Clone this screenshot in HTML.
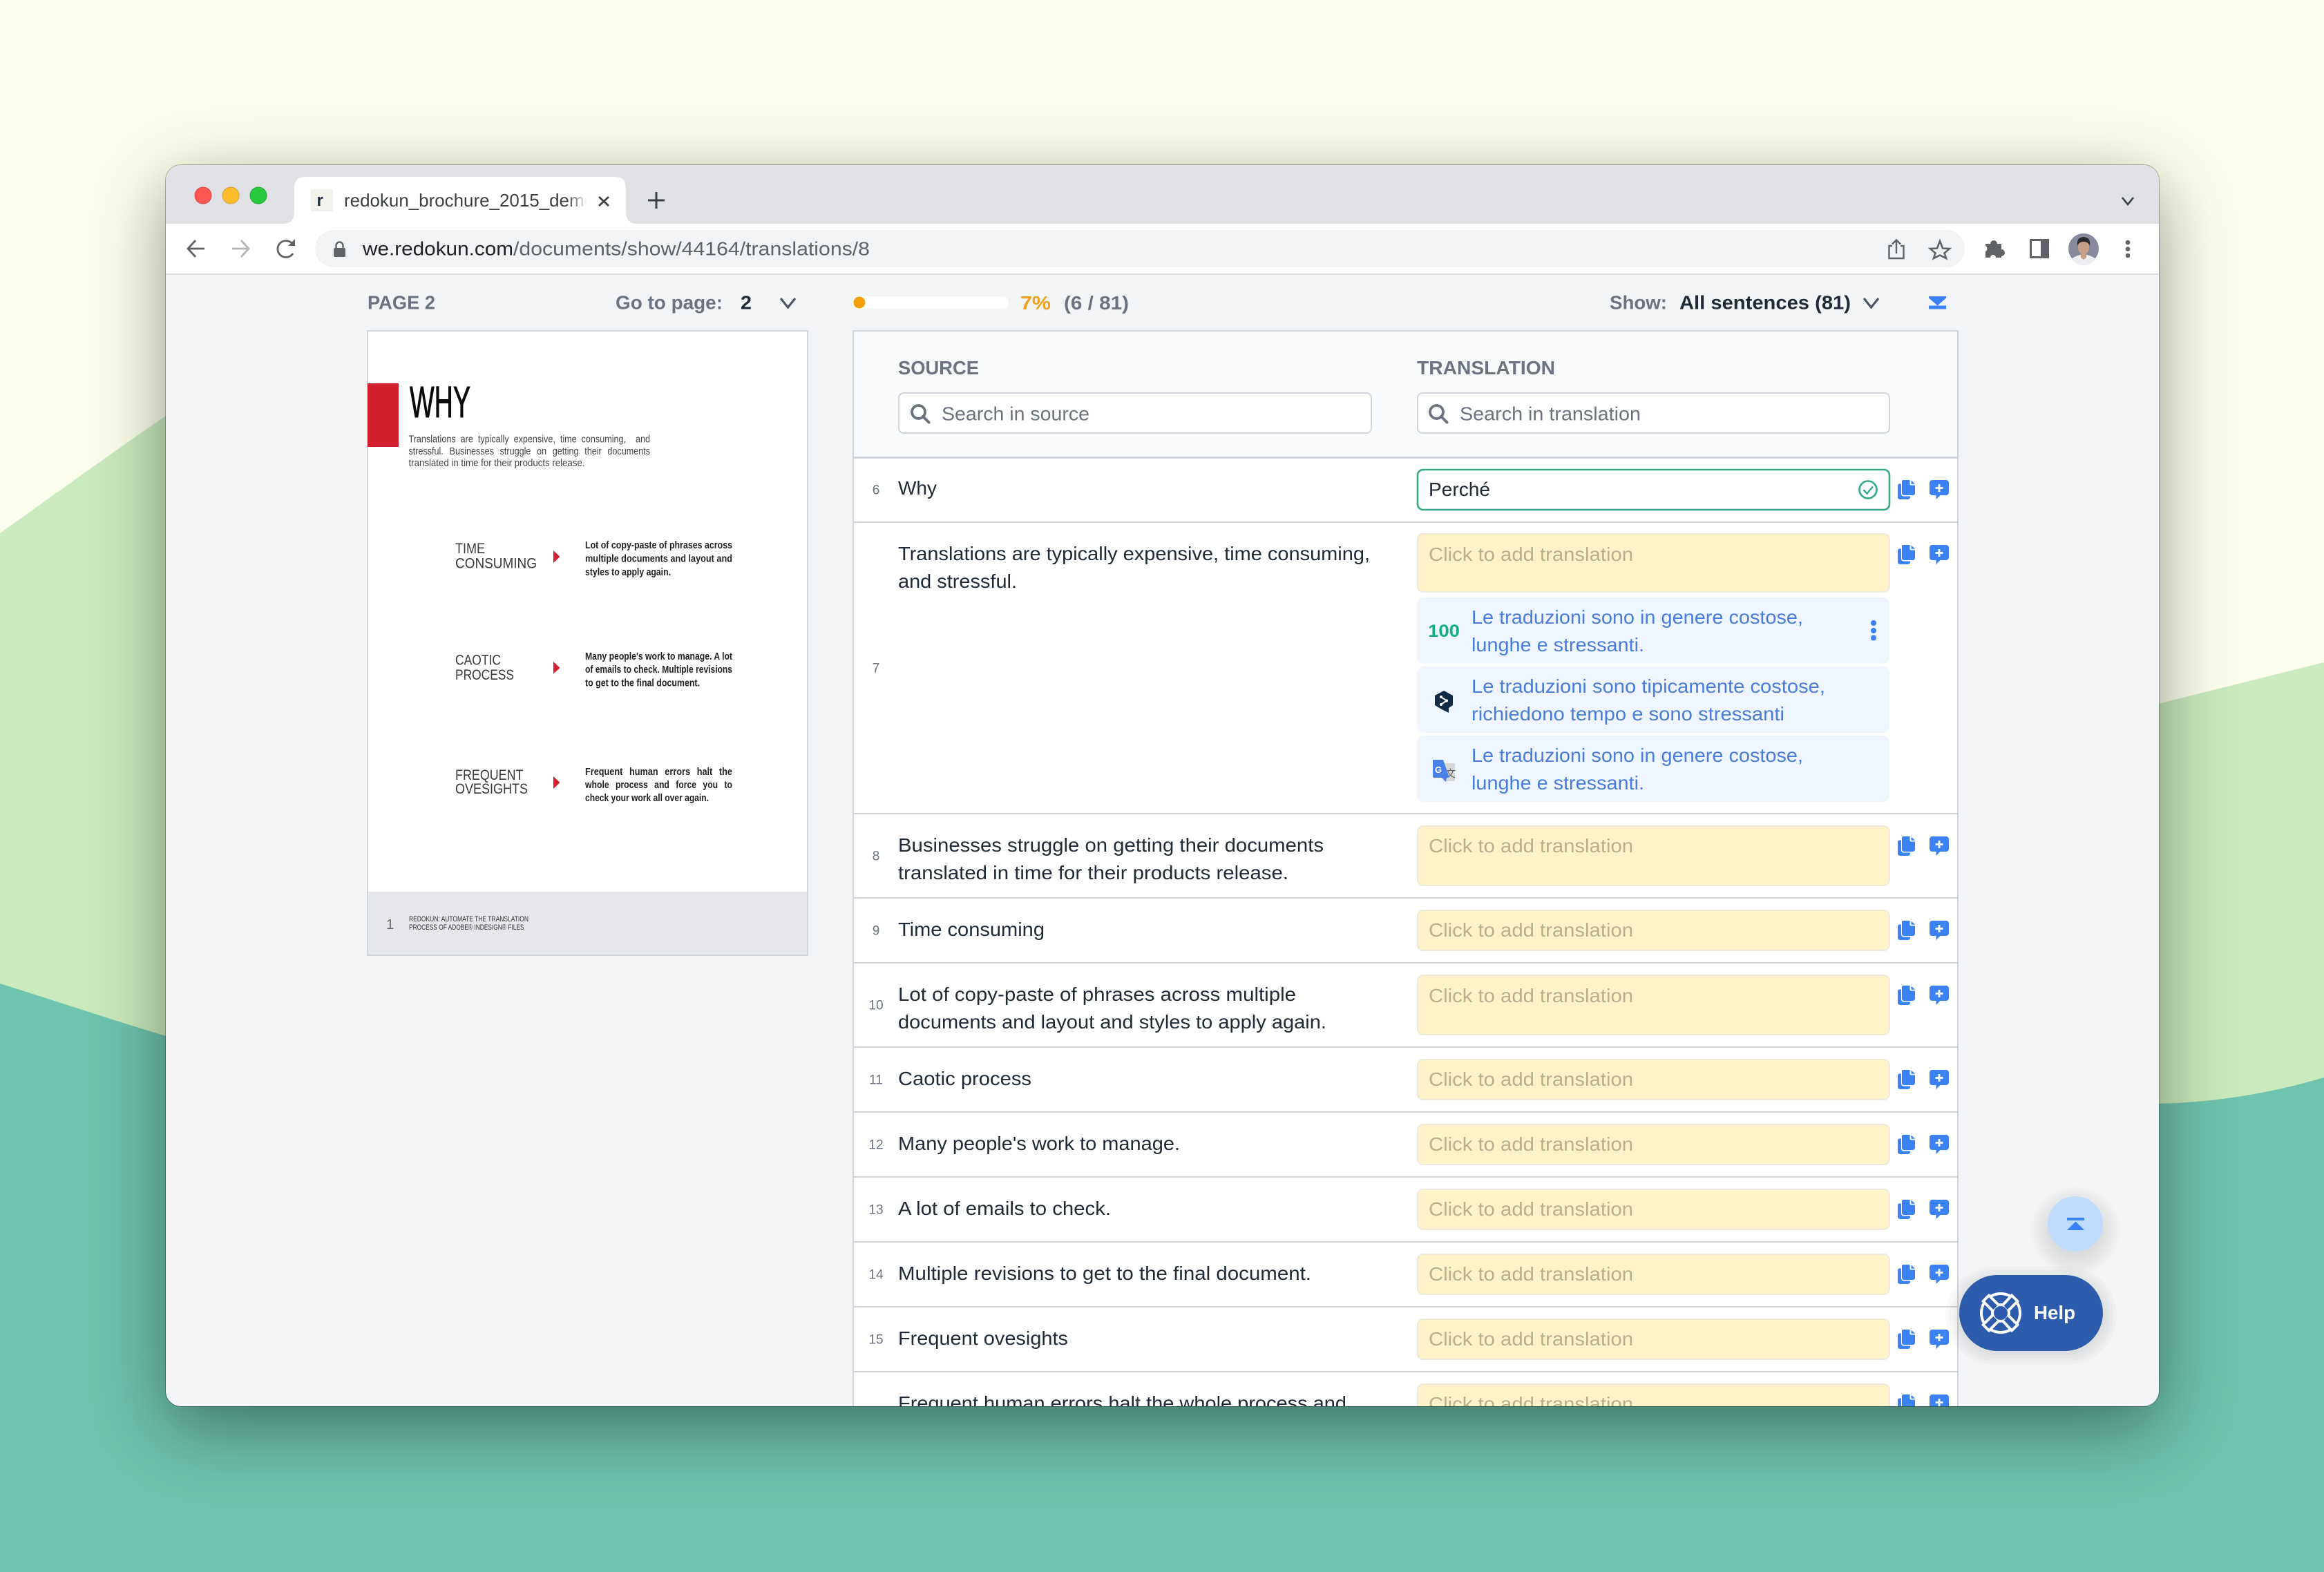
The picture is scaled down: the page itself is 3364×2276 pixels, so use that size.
<!DOCTYPE html>
<html lang="en"><head><meta charset="utf-8"><title>Redokun translation editor</title>
<style>
html,body{margin:0;padding:0;width:3364px;height:2276px;overflow:hidden;background:#fcffeb}
svg{position:absolute;left:0;top:0;display:block}
text{font-family:"Liberation Sans",Arial,sans-serif;white-space:pre}
.b{font-weight:700}
.n{font-family:"Liberation Sans Narrow","Liberation Sans",sans-serif}
.s{font-size:28px;fill:#1f2937}
.p{font-size:28px;fill:#b7b08f}
.t{font-size:28px;fill:#4a7cdc}
.num{font-size:19px;fill:#6b7280;text-anchor:middle}
.h{font-size:27.5px;fill:#6b7280;font-weight:700}
.d{font-size:14.5px;fill:#222;font-weight:700}
.c{font-size:21px;fill:#3a3a3a}
</style></head><body>
<svg width="3364" height="2276" viewBox="0 0 3364 2276" xmlns="http://www.w3.org/2000/svg">
<defs>
<linearGradient id="hx" gradientUnits="userSpaceOnUse" x1="110" x2="3255" y1="0" y2="0">
<stop offset="0" stop-color="#000" stop-opacity="0"/><stop offset=".00954" stop-color="#000" stop-opacity=".023"/><stop offset=".01749" stop-color="#000" stop-opacity=".067"/><stop offset=".02544" stop-color="#000" stop-opacity=".159"/><stop offset=".03339" stop-color="#000" stop-opacity=".309"/><stop offset=".04134" stop-color="#000" stop-opacity=".5"/><stop offset=".04928" stop-color="#000" stop-opacity=".691"/><stop offset=".05723" stop-color="#000" stop-opacity=".841"/><stop offset=".06518" stop-color="#000" stop-opacity=".933"/><stop offset=".07313" stop-color="#000" stop-opacity=".977"/><stop offset=".08267" stop-color="#000" stop-opacity="1"/>
<stop offset=".91733" stop-color="#000" stop-opacity="1"/><stop offset=".92687" stop-color="#000" stop-opacity=".977"/><stop offset=".93482" stop-color="#000" stop-opacity=".933"/><stop offset=".94277" stop-color="#000" stop-opacity=".841"/><stop offset=".95072" stop-color="#000" stop-opacity=".691"/><stop offset=".95866" stop-color="#000" stop-opacity=".5"/><stop offset=".96661" stop-color="#000" stop-opacity=".309"/><stop offset=".97456" stop-color="#000" stop-opacity=".159"/><stop offset=".98251" stop-color="#000" stop-opacity=".067"/><stop offset=".99046" stop-color="#000" stop-opacity=".023"/><stop offset="1" stop-color="#000" stop-opacity="0"/>
</linearGradient>
<linearGradient id="vy" gradientUnits="userSpaceOnUse" x1="0" x2="0" y1="139" y2="2196">
<stop offset="0" stop-color="#fff" stop-opacity="0"/><stop offset=".01458" stop-color="#fff" stop-opacity=".023"/><stop offset=".02674" stop-color="#fff" stop-opacity=".067"/><stop offset=".03889" stop-color="#fff" stop-opacity=".159"/><stop offset=".05105" stop-color="#fff" stop-opacity=".309"/><stop offset=".0632" stop-color="#fff" stop-opacity=".5"/><stop offset=".07535" stop-color="#fff" stop-opacity=".691"/><stop offset=".08751" stop-color="#fff" stop-opacity=".841"/><stop offset=".09966" stop-color="#fff" stop-opacity=".933"/><stop offset=".11181" stop-color="#fff" stop-opacity=".977"/><stop offset=".1264" stop-color="#fff" stop-opacity="1"/>
<stop offset=".8736" stop-color="#fff" stop-opacity="1"/><stop offset=".88819" stop-color="#fff" stop-opacity=".977"/><stop offset=".90034" stop-color="#fff" stop-opacity=".933"/><stop offset=".91249" stop-color="#fff" stop-opacity=".841"/><stop offset=".92465" stop-color="#fff" stop-opacity=".691"/><stop offset=".9368" stop-color="#fff" stop-opacity=".5"/><stop offset=".94895" stop-color="#fff" stop-opacity=".309"/><stop offset=".96111" stop-color="#fff" stop-opacity=".159"/><stop offset=".97326" stop-color="#fff" stop-opacity=".067"/><stop offset=".98542" stop-color="#fff" stop-opacity=".023"/><stop offset="1" stop-color="#fff" stop-opacity="0"/>
</linearGradient>
<mask id="my" maskUnits="userSpaceOnUse" x="110" y="139" width="3145" height="2057"><rect x="110" y="139" width="3145" height="2057" fill="url(#vy)"/></mask>
<radialGradient id="upsh" gradientUnits="userSpaceOnUse" cx="3004" cy="1782" r="66"><stop offset=".55" stop-color="#000" stop-opacity=".1"/><stop offset="1" stop-color="#000" stop-opacity="0"/></radialGradient>
<clipPath id="win"><rect x="240" y="239" width="2885" height="1797" rx="22"/></clipPath>
<linearGradient id="fade" gradientUnits="userSpaceOnUse" x1="822" x2="850" y1="0" y2="0"><stop offset="0" stop-color="#3c4043"/><stop offset="1" stop-color="#3c4043" stop-opacity="0"/></linearGradient>
<symbol id="copy" width="25" height="28" viewBox="0 0 25 28" overflow="visible">
<path d="M0 8a2.5 2.5 0 0 1 2.5-2.5H5V20a3.5 3.5 0 0 0 3.500 3.500H18V25a3 3 0 0 1-3 3H3a3 3 0 0 1-3-3Z" fill="#3b82f6"/>
<path d="M8 0H17.500V5.500A2 2 0 0 0 19.500 7.500H25V19a3 3 0 0 1-3 3H9a3 3 0 0 1-3-3V2a2 2 0 0 1 2-2Z" fill="#3b82f6"/>
<path d="M19.500 0.500L25 5.800H19.500Z" fill="#3b82f6"/>
</symbol>
<symbol id="cm" width="28" height="28" viewBox="0 0 28 28" overflow="visible">
<path d="M4 0H24a4 4 0 0 1 4 4V18a4 4 0 0 1-4 4H15.500L9.500 28V22H4a4 4 0 0 1-4-4V4a4 4 0 0 1 4-4Z" fill="#3b82f6"/>
<path d="M14 6V17M8.500 11.500H19.500" stroke="#fff" stroke-width="2.800" fill="none"/>
</symbol>
<symbol id="mag" width="28" height="28" viewBox="0 0 28 28" overflow="visible">
<circle cx="11.500" cy="11.500" r="9.500" fill="none" stroke="#6b7280" stroke-width="3.800"/>
<path d="M18 18L26.500 26.500" stroke="#6b7280" stroke-width="4" stroke-linecap="round"/>
</symbol>
</defs>
<rect width="3364" height="2276" fill="#fcffeb"/>
<path d="M0 772C80 715 160 657 240 602C1200 300 2400 1200 3124 1019C3200 1000 3280 980 3364 959V2276H0Z" fill="#cbeabd"/>
<path d="M0 1424C80 1449 160 1476 240 1500C1200 1640 2400 1500 3124 1598C3210 1596 3290 1582 3364 1560V2276H0Z" fill="#6ec4ae"/>
<!-- window shadow: product of horizontal and vertical falloff -->
<rect x="110" y="139" width="3145" height="2057" fill="url(#hx)" fill-opacity=".42" opacity=".999" mask="url(#my)"/>
<rect x="239.500" y="238.500" width="2886" height="1798" rx="22.500" fill="none" stroke="#000" stroke-opacity=".28" stroke-width="1"/>
<g clip-path="url(#win)">
<!-- chrome -->
<rect x="240" y="239" width="2885" height="1797" fill="#f3f4f6"/>
<rect x="240" y="239" width="2885" height="85" fill="#dfe1e5"/>
<rect x="240" y="324" width="2885" height="72" fill="#fff"/>
<rect x="240" y="396" width="2885" height="2" fill="#dadce0"/>
<circle cx="294" cy="283" r="12" fill="#fc5753" stroke="#df4744" stroke-width="1"/>
<circle cx="334" cy="283" r="12" fill="#fdbc2e" stroke="#de9f34" stroke-width="1"/>
<circle cx="374" cy="283" r="12" fill="#28c83f" stroke="#27aa35" stroke-width="1"/>
<path d="M410 324Q426 324 426 306V272Q426 256 442 256H890Q906 256 906 272V306Q906 324 922 324Z" fill="#fff"/>
<rect x="450" y="274" width="32" height="32" fill="#f3f3ee"/>
<text x="458.500" y="298" font-size="24" class="b" fill="#1f2d3d">r</text>
<text x="498" y="299" font-size="26" textLength="362" lengthAdjust="spacingAndGlyphs" fill="url(#fade)">redokun_brochure_2015_demo</text>
<path d="M867 285L881 298M881 285L867 298" stroke="#3c4043" stroke-width="2.800"/>
<path d="M950 278V302M938 290H962" stroke="#3c4043" stroke-width="3"/>
<path d="M3072 286L3080 296L3088 286" stroke="#3c4043" stroke-width="2.600" fill="none"/>
<path d="M296 360H273M283 348L272 360L283 372" stroke="#5f6368" stroke-width="2.800" fill="none"/>
<path d="M336 360H359M349 348L360 360L349 372" stroke="#b4b7bb" stroke-width="2.800" fill="none"/>
<path d="M424 354A12 12 0 1 0 424 367" stroke="#5f6368" stroke-width="2.800" fill="none"/>
<path d="M417 356H427V346Z" fill="#5f6368"/>
<rect x="456" y="333" width="2388" height="54" rx="27" fill="#f1f3f4"/>
<rect x="483" y="359" width="17" height="13" rx="2" fill="#5f6368"/>
<path d="M486.500 359V355.500A5 5 0 0 1 496.500 355.500V359" stroke="#5f6368" stroke-width="2.400" fill="none"/>
<text x="525" y="369.500" font-size="28" textLength="218" lengthAdjust="spacingAndGlyphs" fill="#202124">we.redokun.com</text>
<text x="743" y="369.500" font-size="28" textLength="516" lengthAdjust="spacingAndGlyphs" fill="#5f6368">/documents/show/44164/translations/8</text>
<path d="M2739 356H2734.500V374H2755.500V356H2751M2745 367V348M2739 353.500L2745 347.500L2751 353.500" stroke="#5f6368" stroke-width="2.400" fill="none"/>
<path d="M2808 349L2812 359.500L2822 360L2814.500 366.500L2817 374L2808 369.500L2799 374L2801.500 366.500L2794 360L2804 359.500Z" stroke="#5f6368" stroke-width="2.600" fill="none"/>
<path d="M2874 353H2881A5 5 0 0 1 2891 353H2897V361A5 5 0 0 1 2897 371V373H2889A4 4 0 0 0 2881 373H2874V364A4.500 4.500 0 0 0 2874 356Z" fill="#5f6368"/>
<rect x="2938" y="346" width="28" height="28" fill="#5f6368"/>
<rect x="2941" y="349" width="13" height="22" fill="#fff"/>
<circle cx="3016" cy="360" r="22" fill="#878a9b"/>
<path d="M2998 375Q3016 362 3034 375A22 22 0 0 1 2998 375Z" fill="#eceef2"/>
<ellipse cx="3016" cy="358" rx="8" ry="11" fill="#c79d87"/>
<path d="M3012 366H3020V373L3016 376L3012 373Z" fill="#c79d87"/>
<path d="M3007 356Q3005 344 3016 343Q3027 344 3025 356Q3023 350 3016 350Q3009 350 3007 356Z" fill="#2b2a2e"/>
<circle cx="3080" cy="351" r="3.300" fill="#5f6368"/><circle cx="3080" cy="360.500" r="3.300" fill="#5f6368"/><circle cx="3080" cy="370" r="3.300" fill="#5f6368"/>

<!-- top bar -->
<text x="532" y="447.500" class="h" textLength="98" lengthAdjust="spacingAndGlyphs">PAGE 2</text>
<text x="891" y="447.500" class="h" textLength="155" lengthAdjust="spacingAndGlyphs">Go to page:</text>
<text x="1072" y="447.500" class="h" style="fill:#1f2937" textLength="16" lengthAdjust="spacingAndGlyphs">2</text>
<path d="M1130 432L1140.500 445L1151 432" stroke="#4b5563" stroke-width="3.200" fill="none"/>
<rect x="1236" y="429" width="224" height="18" rx="9" fill="#fff"/>
<circle cx="1244" cy="438" r="8.500" fill="#f59e0b"/>
<text x="1477" y="448" class="h" style="fill:#f29f1b" textLength="44" lengthAdjust="spacingAndGlyphs">7%</text>
<text x="1540" y="448" class="h" textLength="94" lengthAdjust="spacingAndGlyphs">(6 / 81)</text>
<text x="2330" y="447.500" class="h" textLength="83" lengthAdjust="spacingAndGlyphs">Show:</text>
<text x="2431" y="447.500" class="h" style="fill:#1f2937" textLength="248" lengthAdjust="spacingAndGlyphs">All sentences (81)</text>
<path d="M2698 432L2708.500 445L2719 432" stroke="#4b5563" stroke-width="3.200" fill="none"/>
<path d="M2792 429H2817V431.500L2804.500 442.500L2792 431.500ZM2792 442.500H2817V447.500H2792Z" fill="#3b82f6"/>

<!-- document preview -->
<rect x="532" y="479" width="637" height="904" fill="#fff" stroke="#d1d5db" stroke-width="2"/>
<rect x="532" y="555" width="45" height="92" fill="#d2202f"/>
<text x="593" y="604" class="n" font-size="64" textLength="88" lengthAdjust="spacingAndGlyphs" fill="#0a0a0a" stroke="#0a0a0a" stroke-width="1">WHY</text>
<g>
<text x="591.500" y="640.500" class="n" font-size="14.500" fill="#444" word-spacing="4" textLength="349.500" lengthAdjust="spacingAndGlyphs">Translations are typically expensive, time consuming,  and</text>
<text x="591.500" y="658" class="n" font-size="14.500" fill="#444" word-spacing="6" textLength="349.500" lengthAdjust="spacingAndGlyphs">stressful. Businesses struggle on getting their documents</text>
<text x="591.500" y="675" class="n" font-size="14.500" fill="#444" textLength="255" lengthAdjust="spacingAndGlyphs">translated in time for their products release.</text>
</g>
<text x="659" y="801" class="n c" textLength="43" lengthAdjust="spacingAndGlyphs">TIME</text>
<text x="659" y="822.500" class="n c" textLength="118" lengthAdjust="spacingAndGlyphs">CONSUMING</text>
<text x="659" y="962.500" class="n c" textLength="66" lengthAdjust="spacingAndGlyphs">CAOTIC</text>
<text x="659" y="984" class="n c" textLength="85" lengthAdjust="spacingAndGlyphs">PROCESS</text>
<text x="659" y="1129" class="n c" textLength="98.500" lengthAdjust="spacingAndGlyphs">FREQUENT</text>
<text x="659" y="1149" class="n c" textLength="105" lengthAdjust="spacingAndGlyphs">OVESIGHTS</text>
<path d="M801 797L810.500 806L801 815ZM801 958L810.500 967L801 975.500ZM801 1124L810.500 1133L801 1142Z" fill="#d2202f"/>
<text x="847" y="794" class="n d" textLength="213" lengthAdjust="spacingAndGlyphs">Lot of copy-paste of phrases across</text>
<text x="847" y="813.500" class="n d" textLength="213" lengthAdjust="spacingAndGlyphs">multiple documents and layout and</text>
<text x="847" y="833" class="n d" textLength="124" lengthAdjust="spacingAndGlyphs">styles to apply again.</text>
<text x="847" y="955" class="n d" textLength="213" lengthAdjust="spacingAndGlyphs">Many people's work to manage. A lot</text>
<text x="847" y="974" class="n d" textLength="213" lengthAdjust="spacingAndGlyphs">of emails to check. Multiple revisions</text>
<text x="847" y="993.500" class="n d" textLength="166" lengthAdjust="spacingAndGlyphs">to get to the final document.</text>
<text x="847" y="1122" class="n d" word-spacing="7" textLength="213" lengthAdjust="spacingAndGlyphs">Frequent human errors halt the</text>
<text x="847" y="1141" class="n d" word-spacing="7" textLength="213" lengthAdjust="spacingAndGlyphs">whole process and force you to</text>
<text x="847" y="1160" class="n d" textLength="179" lengthAdjust="spacingAndGlyphs">check your work all over again.</text>
<rect x="533" y="1291" width="635" height="91" fill="#e5e7eb"/>
<text x="559" y="1345" class="n" font-size="20" fill="#666">1</text>
<text x="592" y="1334" class="n" font-size="11" fill="#333" textLength="173" lengthAdjust="spacingAndGlyphs">REDOKUN: AUTOMATE THE TRANSLATION</text>
<text x="592" y="1346" class="n" font-size="11" fill="#333" textLength="166.500" lengthAdjust="spacingAndGlyphs">PROCESS OF ADOBE® INDESIGN® FILES</text>

<!-- table -->
<rect x="1235" y="479" width="1599" height="1600" fill="#fff" stroke="#d1d5db" stroke-width="2"/>
<rect x="1236" y="480" width="1597" height="181" fill="#f9fafb"/>
<rect x="1236" y="661" width="1597" height="3" fill="#d1d5db"/>
<text x="1300" y="542" class="h" textLength="117" lengthAdjust="spacingAndGlyphs">SOURCE</text>
<text x="2051" y="542" class="h" textLength="200" lengthAdjust="spacingAndGlyphs">TRANSLATION</text>
<rect x="1301" y="569" width="684" height="58" rx="7" fill="#fff" stroke="#d1d5db" stroke-width="2"/>
<rect x="2052" y="569" width="683" height="58" rx="7" fill="#fff" stroke="#d1d5db" stroke-width="2"/>
<use href="#mag" x="1318" y="585"/>
<use href="#mag" x="2068" y="585"/>
<text x="1363" y="608.500" font-size="28" fill="#6b7280" textLength="214" lengthAdjust="spacingAndGlyphs">Search in source</text>
<text x="2113" y="608.500" font-size="28" fill="#6b7280" textLength="262" lengthAdjust="spacingAndGlyphs">Search in translation</text>

<!-- row lines -->
<g fill="#d1d5db">
<rect x="1236" y="755" width="1597" height="2"/>
<rect x="1236" y="1177" width="1597" height="2"/>
<rect x="1236" y="1299" width="1597" height="2"/>
<rect x="1236" y="1393" width="1597" height="2"/>
<rect x="1236" y="1515" width="1597" height="2"/>
<rect x="1236" y="1609" width="1597" height="2"/>
<rect x="1236" y="1703" width="1597" height="2"/>
<rect x="1236" y="1797" width="1597" height="2"/>
<rect x="1236" y="1891" width="1597" height="2"/>
<rect x="1236" y="1985" width="1597" height="2"/>
</g>

<!-- numbers -->
<text x="1268" y="715.500" class="num">6</text>
<text x="1268" y="973.500" class="num">7</text>
<text x="1268" y="1245.500" class="num">8</text>
<text x="1268" y="1353.500" class="num">9</text>
<text x="1268" y="1461.500" class="num">10</text>
<text x="1268" y="1569.500" class="num">11</text>
<text x="1268" y="1663.500" class="num">12</text>
<text x="1268" y="1757.500" class="num">13</text>
<text x="1268" y="1851.500" class="num">14</text>
<text x="1268" y="1945.500" class="num">15</text>

<!-- source -->
<text x="1300" y="716" class="s" textLength="56" lengthAdjust="spacingAndGlyphs">Why</text>
<text x="1300" y="811" class="s" textLength="683" lengthAdjust="spacingAndGlyphs">Translations are typically expensive, time consuming,</text>
<text x="1300" y="851" class="s" textLength="172" lengthAdjust="spacingAndGlyphs">and stressful.</text>
<text x="1300" y="1233" class="s" textLength="616" lengthAdjust="spacingAndGlyphs">Businesses struggle on getting their documents</text>
<text x="1300" y="1273" class="s" textLength="565" lengthAdjust="spacingAndGlyphs">translated in time for their products release.</text>
<text x="1300" y="1355" class="s" textLength="212" lengthAdjust="spacingAndGlyphs">Time consuming</text>
<text x="1300" y="1449" class="s" textLength="576" lengthAdjust="spacingAndGlyphs">Lot of copy-paste of phrases across multiple</text>
<text x="1300" y="1489" class="s" textLength="620" lengthAdjust="spacingAndGlyphs">documents and layout and styles to apply again.</text>
<text x="1300" y="1571" class="s" textLength="193" lengthAdjust="spacingAndGlyphs">Caotic process</text>
<text x="1300" y="1665" class="s" textLength="408" lengthAdjust="spacingAndGlyphs">Many people's work to manage.</text>
<text x="1300" y="1759" class="s" textLength="308" lengthAdjust="spacingAndGlyphs">A lot of emails to check.</text>
<text x="1300" y="1853" class="s" textLength="598" lengthAdjust="spacingAndGlyphs">Multiple revisions to get to the final document.</text>
<text x="1300" y="1947" class="s" textLength="246" lengthAdjust="spacingAndGlyphs">Frequent ovesights</text>
<text x="1300" y="2041" class="s" textLength="649" lengthAdjust="spacingAndGlyphs">Frequent human errors halt the whole process and</text>

<!-- translation boxes -->
<rect x="2052" y="680" width="683" height="58" rx="8" fill="#fff" stroke="#38a78a" stroke-width="2.600"/>
<text x="2068" y="718" class="s" textLength="89" lengthAdjust="spacingAndGlyphs">Perché</text>
<circle cx="2704" cy="709" r="12.500" fill="none" stroke="#2fa98a" stroke-width="2.600"/>
<path d="M2697.500 709.500L2702.500 714.500L2711 704.500" fill="none" stroke="#2fa98a" stroke-width="2.400"/>
<g fill="#fef2c8" stroke="#eeeade" stroke-width="2">
<rect x="2052" y="773" width="683" height="84" rx="8"/>
<rect x="2052" y="1196" width="683" height="86" rx="8"/>
<rect x="2052" y="1318" width="683" height="58" rx="8"/>
<rect x="2052" y="1412" width="683" height="86" rx="8"/>
<rect x="2052" y="1534" width="683" height="58" rx="8"/>
<rect x="2052" y="1628" width="683" height="58" rx="8"/>
<rect x="2052" y="1722" width="683" height="58" rx="8"/>
<rect x="2052" y="1816" width="683" height="58" rx="8"/>
<rect x="2052" y="1910" width="683" height="58" rx="8"/>
<rect x="2052" y="2004" width="683" height="58" rx="8"/>
</g>
<text x="2068" y="812" class="p" textLength="296" lengthAdjust="spacingAndGlyphs">Click to add translation</text>
<text x="2068" y="1234" class="p" textLength="296" lengthAdjust="spacingAndGlyphs">Click to add translation</text>
<text x="2068" y="1356" class="p" textLength="296" lengthAdjust="spacingAndGlyphs">Click to add translation</text>
<text x="2068" y="1451" class="p" textLength="296" lengthAdjust="spacingAndGlyphs">Click to add translation</text>
<text x="2068" y="1572" class="p" textLength="296" lengthAdjust="spacingAndGlyphs">Click to add translation</text>
<text x="2068" y="1666" class="p" textLength="296" lengthAdjust="spacingAndGlyphs">Click to add translation</text>
<text x="2068" y="1760" class="p" textLength="296" lengthAdjust="spacingAndGlyphs">Click to add translation</text>
<text x="2068" y="1854" class="p" textLength="296" lengthAdjust="spacingAndGlyphs">Click to add translation</text>
<text x="2068" y="1948" class="p" textLength="296" lengthAdjust="spacingAndGlyphs">Click to add translation</text>
<text x="2068" y="2042" class="p" textLength="296" lengthAdjust="spacingAndGlyphs">Click to add translation</text>

<!-- suggestions -->
<rect x="2051" y="865" width="684" height="96" rx="10" fill="#eff6ff"/>
<rect x="2051" y="965" width="684" height="96" rx="10" fill="#eff6ff"/>
<rect x="2051" y="1065" width="684" height="96" rx="10" fill="#eff6ff"/>
<text x="2067" y="922" font-size="25" class="b" fill="#10b07f" textLength="46" lengthAdjust="spacingAndGlyphs">100</text>
<text x="2130" y="903" class="t" textLength="480" lengthAdjust="spacingAndGlyphs">Le traduzioni sono in genere costose,</text>
<text x="2130" y="943" class="t" textLength="250" lengthAdjust="spacingAndGlyphs">lunghe e stressanti.</text>
<circle cx="2712" cy="902" r="4" fill="#3b82f6"/><circle cx="2712" cy="913" r="4" fill="#3b82f6"/><circle cx="2712" cy="923.500" r="4" fill="#3b82f6"/>
<text x="2130" y="1003" class="t" textLength="512" lengthAdjust="spacingAndGlyphs">Le traduzioni sono tipicamente costose,</text>
<text x="2130" y="1043" class="t" textLength="453" lengthAdjust="spacingAndGlyphs">richiedono tempo e sono stressanti</text>
<text x="2130" y="1103" class="t" textLength="480" lengthAdjust="spacingAndGlyphs">Le traduzioni sono in genere costose,</text>
<text x="2130" y="1143" class="t" textLength="250" lengthAdjust="spacingAndGlyphs">lunghe e stressanti.</text>
<path d="M2090 1000L2103 1007V1021L2097 1025V1032L2087 1027L2077 1021V1007Z" fill="#0f2b46"/>
<path d="M2086.500 1009.500L2094 1014.500L2086.500 1019.500" stroke="#fff" stroke-width="2" fill="none"/>
<circle cx="2086" cy="1009" r="2" fill="#fff"/><circle cx="2086" cy="1020" r="2" fill="#fff"/><circle cx="2094" cy="1014.500" r="2" fill="#fff"/>
<rect x="2089" y="1105" width="17" height="26" fill="#d9d9d9"/>
<text x="2092" y="1125" font-size="15" fill="#666" style="font-family:'Liberation Sans','Noto Sans CJK SC',sans-serif">文</text>
<path d="M2074 1100H2089L2098 1126H2094L2093 1132L2087 1126H2076A2 2 0 0 1 2074 1124Z" fill="#4a80e8"/>
<text x="2077" y="1119" font-size="13" class="b" fill="#fff">G</text>

<!-- row icons -->
<use href="#copy" x="2747" y="695"/><use href="#cm" x="2793" y="695"/>
<use href="#copy" x="2747" y="789"/><use href="#cm" x="2793" y="789"/>
<use href="#copy" x="2747" y="1211"/><use href="#cm" x="2793" y="1211"/>
<use href="#copy" x="2747" y="1333"/><use href="#cm" x="2793" y="1333"/>
<use href="#copy" x="2747" y="1427"/><use href="#cm" x="2793" y="1427"/>
<use href="#copy" x="2747" y="1549"/><use href="#cm" x="2793" y="1549"/>
<use href="#copy" x="2747" y="1643"/><use href="#cm" x="2793" y="1643"/>
<use href="#copy" x="2747" y="1737"/><use href="#cm" x="2793" y="1737"/>
<use href="#copy" x="2747" y="1831"/><use href="#cm" x="2793" y="1831"/>
<use href="#copy" x="2747" y="1925"/><use href="#cm" x="2793" y="1925"/>
<use href="#copy" x="2747" y="2019"/><use href="#cm" x="2793" y="2019"/>

<!-- floating -->
<circle cx="3004" cy="1782" r="66" fill="url(#upsh)"/>
<circle cx="3004" cy="1772" r="40" fill="#bfdbfe"/>
<path d="M2992 1763H3017V1767H2992ZM3004.500 1768.500L3017 1781H2992Z" fill="#3b82f6"/>
<g fill="#000" fill-opacity=".02">
<rect x="2816" y="1834" width="248" height="142" rx="71"/>
<rect x="2821" y="1839" width="238" height="132" rx="66"/>
<rect x="2826" y="1844" width="228" height="122" rx="61"/>
<rect x="2831" y="1849" width="218" height="112" rx="56"/>
</g>
<rect x="2836" y="1846" width="208" height="110" rx="55" fill="#2d5cad"/>
<g fill="none" stroke="#fff" stroke-width="4">
<circle cx="2896" cy="1901" r="28"/>
<circle cx="2896" cy="1901" r="12"/>
<g stroke-linejoin="round" fill="#2d5cad">
<path d="M2892.500 1889L2879 1875.500L2870.500 1884L2884 1897.500"/>
<path d="M2907 1897.500L2920.500 1884L2912 1875.500L2899.500 1889"/>
<path d="M2899.500 1913L2912 1926.500L2920.500 1918L2907 1904.500"/>
<path d="M2884 1904.500L2870.500 1918L2879 1926.500L2892.500 1913"/>
</g>
</g>
<text x="2944" y="1910" font-size="28" class="b" fill="#fff" textLength="60" lengthAdjust="spacingAndGlyphs">Help</text>
</g>
</svg>
</body></html>
